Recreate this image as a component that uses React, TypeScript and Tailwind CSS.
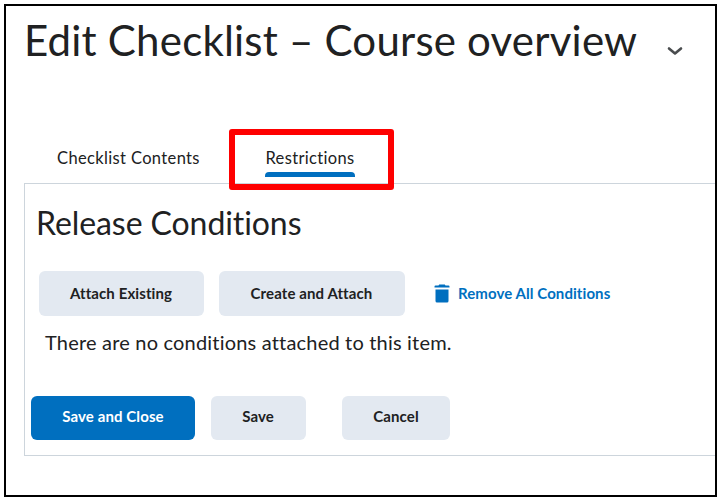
import type { ReactNode } from "react";

function Button({
  children,
  className = "",
  primary = false,
}: {
  children: ReactNode;
  className?: string;
  primary?: boolean;
}) {
  return (
    <button
      type="button"
      className={`flex shrink-0 items-center justify-center rounded-[6px] text-[15px] font-bold tracking-[0.1px] whitespace-nowrap ${
        primary ? "bg-[#006fbf] text-white" : "bg-[#e3e9f1] text-[#202122]"
      } ${className}`}
    >
      {children}
    </button>
  );
}

function ChevronIcon() {
  return (
    <svg width="16" height="10" viewBox="0 0 16 10" fill="none" className="mt-[40px] ml-[30px] shrink-0">
      <path d="M2 2.500l6 5 6-5" stroke="#494c4e" strokeWidth="2.600" strokeLinecap="round" strokeLinejoin="round" />
    </svg>
  );
}

function TrashIcon() {
  return (
    <svg width="16" height="19" viewBox="0 0 16 19" fill="#006fbf" className="shrink-0">
      <path d="M1.500 1.500H4.500L5.200.5H10.800l.7 1H14.500a1 1 0 0 1 1 1V3.500H.5v-1a1 1 0 0 1 1-1z" />
      <path d="M1.500 5.500h13V17a1.500 1.500 0 0 1-1.500 1.500H3A1.500 1.500 0 0 1 1.500 17z" />
    </svg>
  );
}

export default function App() {
  return (
    <div className="h-[502px] w-[719px] bg-white pt-1 pl-1 font-['Lato',sans-serif] text-[#202122] [font-variant-ligatures:none]">
      <main className="flex h-[493px] w-[713px] flex-col overflow-hidden border-2 border-black">
        <header className="flex h-[123px] items-start pl-[18px]">
          <h1 className="mt-[9px] text-[42px] leading-[50px] tracking-[0.21px] whitespace-nowrap">
            Edit Checklist – Course overview
          </h1>
          <ChevronIcon />
        </header>

        <nav className="flex h-[54px] shrink-0 items-start pl-[51px]">
          <button type="button" className="mt-[18px] w-[172px] text-left text-[16.5px] leading-[22px] tracking-[0.36px] whitespace-nowrap">
            Checklist Contents
          </button>
          <div className="relative z-10 flex h-[61px] w-[165px] shrink-0 rounded-[3px] border-[6px] border-[#fe0000] pl-[30px]">
            <button type="button" className="mt-[12px] flex h-[30px] w-[90px] flex-col text-[16.5px] leading-[22px] tracking-[0.34px] whitespace-nowrap">
              Restrictions
              <span className="mt-[3px] h-[5px] w-full rounded-t-[4px] bg-[#006fbf]" />
            </button>
          </div>
        </nav>

        <section className="ml-[18px] h-[273px] shrink-0 border border-r-0 border-[#cdd5dc]">
          <h2 className="mt-[19px] ml-[11px] text-[32px] leading-[40px] tracking-[-0.08px] whitespace-nowrap">
            Release Conditions
          </h2>
          <div className="mt-[28px] ml-[14px] flex h-[45px]">
            <Button className="w-[165px] pr-[1px]">Attach Existing</Button>
            <Button className="ml-[15px] w-[186px] pr-[1px]">Create and Attach</Button>
            <button type="button" className="ml-[29px] flex items-center gap-[8px] text-[15px] font-bold tracking-[0.08px] whitespace-nowrap text-[#006fbf]">
              <TrashIcon />
              Remove All Conditions
            </button>
          </div>
          <p className="mt-[13px] ml-[20px] text-[20px] leading-[26px] tracking-[0.19px] whitespace-nowrap">
            There are no conditions attached to this item.
          </p>
          <footer className="mt-[41px] ml-[6px] flex h-[44px]">
            <Button primary className="w-[164px] pb-[3px]">Save and Close</Button>
            <Button className="ml-[16px] w-[95px] pr-[1px] pb-[3px]">Save</Button>
            <Button className="ml-[36px] w-[108px] pb-[3px]">Cancel</Button>
          </footer>
        </section>
      </main>
    </div>
  );
}
